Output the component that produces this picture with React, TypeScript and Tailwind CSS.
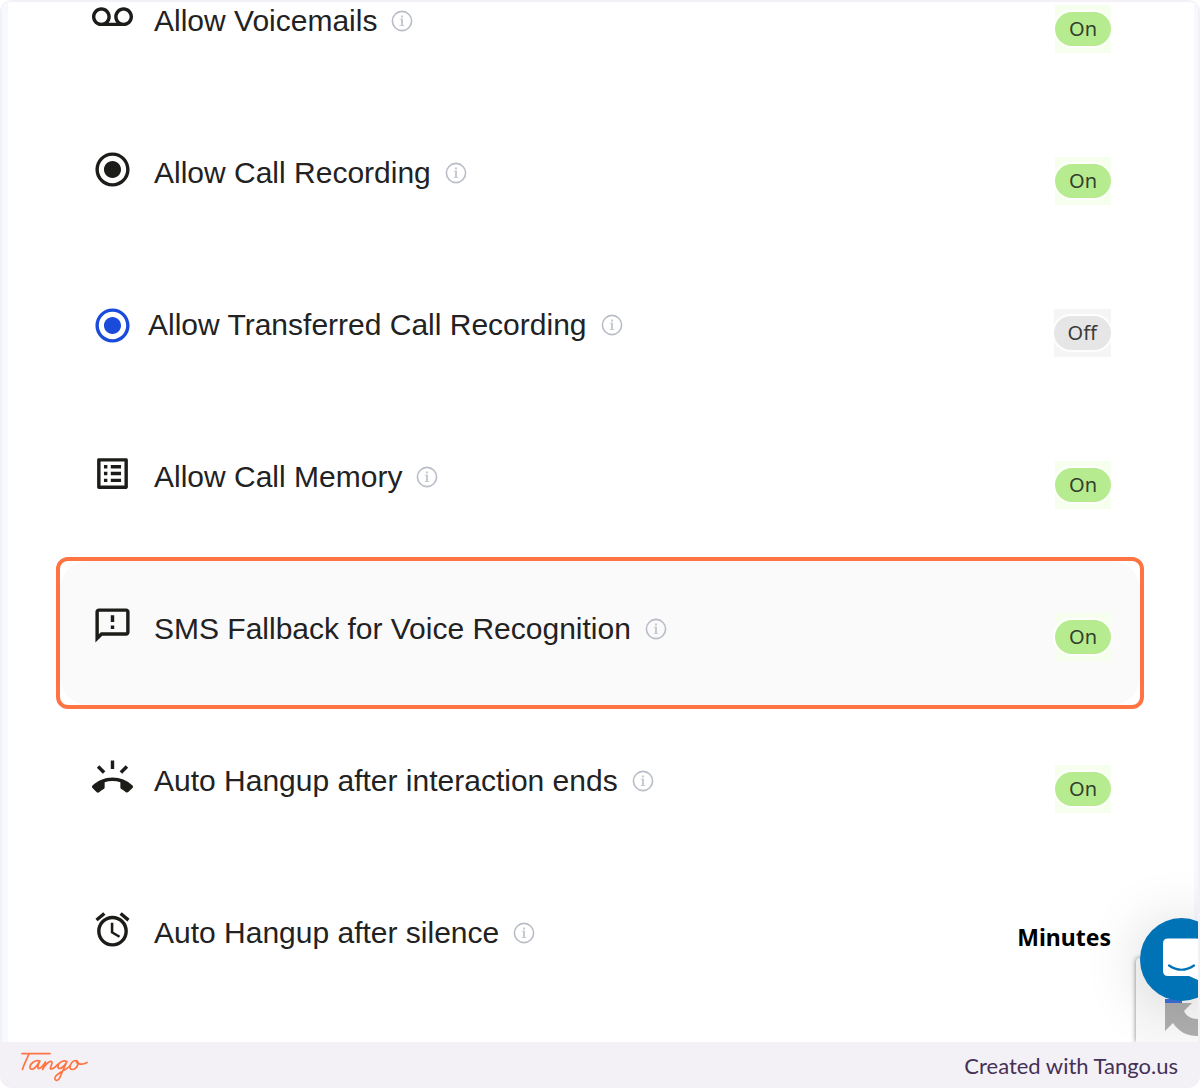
import React from "react";
import {
  MdVoicemail,
  MdRadioButtonChecked,
  MdListAlt,
  MdOutlineSmsFailed,
  MdRingVolume,
  MdAccessAlarm,
} from "react-icons/md";
import type { IconType } from "react-icons";

type Setting = {
  id: string;
  label: string;
  Icon: IconType;
  value: "On" | "Off" | "Minutes";
  active?: boolean;
  highlighted?: boolean;
};

const settings: Setting[] = [
  { id: "voicemail", label: "Allow Voicemails", Icon: MdVoicemail, value: "On" },
  { id: "recording", label: "Allow Call Recording", Icon: MdRadioButtonChecked, value: "On" },
  { id: "transferred", label: "Allow Transferred Call Recording", Icon: MdRadioButtonChecked, value: "Off", active: true },
  { id: "memory", label: "Allow Call Memory", Icon: MdListAlt, value: "On" },
  { id: "sms", label: "SMS Fallback for Voice Recognition", Icon: MdOutlineSmsFailed, value: "On", highlighted: true },
  { id: "hangup", label: "Auto Hangup after interaction ends", Icon: MdRingVolume, value: "On" },
  { id: "silence", label: "Auto Hangup after silence", Icon: MdAccessAlarm, value: "Minutes" },
];

function InfoButton({ label }: { label: string }) {
  return (
    <button type="button" aria-label={`About ${label}`} className="shrink-0">
      <svg viewBox="0 0 22 22" className="size-[22px]" fill="none" stroke="#b9bdc6">
        <circle cx="11" cy="11" r="9.6" strokeWidth="1.6" />
        <path d="M8.8 9.3H11M8.6 15.5h4.800" strokeWidth="1" stroke="#d0d2d8" />
        <path d="M11 8.8v7" strokeWidth="2" stroke="#c6c9d0" />
        <path d="M11 5.6v2" strokeWidth="2" stroke="#c6c9d0" />
      </svg>
    </button>
  );
}

function Toggle({ id, on }: { id: string; on: boolean }) {
  return (
    <button
      type="button"
      role="switch"
      aria-checked={on}
      aria-labelledby={id}
      className={on ? "bg-[#f6ffed] py-[7px]" : "bg-[#f5f5f5] py-[7px]"}
    >
      <span
        className={
          on
            ? "block rounded-full bg-[#b7eb8f] px-[14px] text-xl leading-[34px] text-[#33402e] ring-2 ring-white/90"
            : "block rounded-full bg-[#e6e6e6] px-[14px] text-xl leading-[34px] text-[#3a3a3a] ring-2 ring-white/90"
        }
      >
        {on ? "On" : "Off"}
      </span>
    </button>
  );
}

function Row({ id, label, Icon, value, active, highlighted }: Setting) {
  return (
    <li className={highlighted ? "h-[152px] rounded-xl border-4 border-[#ff7442]" : "h-[152px] p-1"}>
      <div
        className={
          highlighted
            ? "flex h-full items-center rounded-[28px] bg-[#fafafa] pr-[29px] pb-2 pl-8"
            : "flex h-full items-center pr-[29px] pb-2 pl-8"
        }
      >
        <Icon className={active ? "size-[41px] shrink-0 text-[#1a4bdb]" : "mb-2 size-[41px] shrink-0 text-[#1c1c19]"} />
        <span
          id={id}
          className={
            active
              ? "ml-[15px] text-[30px] leading-10 text-[#222222]"
              : "ml-[21px] text-[30px] leading-10 text-[#222222]"
          }
        >
          {label}
        </span>
        <span className="ml-[14px] flex">
          <InfoButton label={label} />
        </span>
        <span
          className={
            value === "Minutes"
              ? "mt-2 ml-auto flex font-['Noto_Sans',sans-serif]"
              : "mt-4 ml-auto flex font-['Noto_Sans',sans-serif]"
          }
        >
          {value === "Minutes" ? (
            <span className="text-[23px] leading-8 font-bold text-black">Minutes</span>
          ) : (
            <Toggle id={id} on={value === "On"} />
          )}
        </span>
      </div>
    </li>
  );
}

function TangoLogo() {
  return (
    <svg
      role="img"
      aria-label="Tango"
      viewBox="0 0 68 30"
      className="h-[30px] w-[68px]"
      fill="none"
      stroke="#ff7442"
      strokeWidth="1.7"
      strokeLinecap="round"
      strokeLinejoin="round"
    >
      <path d="M2 1.700H30M9 1.700C7 7 4 12 2.500 17.500" />
      <path d="M20 9C15 7.500 10 12 10 15C10 19 15 18 19.500 9.500L18 14C17 18.500 21 17 25.500 10L22.500 17.500C26 12 29.500 9 31.500 9.500C34 11 28 17.500 31.500 17C34 17 36 14 38.500 12" />
      <path d="M47 9.500C42 7.500 37.500 12 38 15C38.500 18 43 16.500 46.500 10.500L40.500 24C38.500 30 34 29 35 25.500C37 21 45 19 50 14" />
      <path d="M56 8.500C51 8.500 47.500 17.500 52 17.500C57 17.500 60.500 9.500 56 8.500C56 12 62 13.500 67 10.500" />
    </svg>
  );
}

function ChatWidget() {
  return (
    <div className="absolute right-0 bottom-0 h-[124px] w-[62px]">
      <div className="absolute right-0 bottom-0 h-[84px] w-[62px] overflow-hidden rounded-tl bg-[#f9f9f9] shadow-[0_0_5px_#808080]">
        <svg viewBox="0 0 62 84" className="h-[84px] w-[62px]">
          <path d="M29 41H46V45H29Z" fill="#3f6fd8" />
          <path d="M29 45H56L48 53C50 58 55 61 62 61V78C51 78 43 74 37 65L29 73Z" fill="#aeaeae" />
        </svg>
      </div>
      <button
        type="button"
        aria-label="Open chat"
        className="absolute top-0 left-1 size-[83px] rounded-full bg-[#0073b7] shadow-[0_4px_60px_rgba(0,0,0,0.16)]"
      >
        <svg viewBox="0 0 83 83" className="size-[83px]">
          <path d="M28 20.500H56Q60 20.500 60 24.500V63L49 58H28Q23 58 23 53V25.500Q23 20.500 28 20.500Z" fill="#fff" />
          <path d="M29 47.500Q41.500 56 54 47.500" fill="none" stroke="#0073b7" strokeWidth="2.200" strokeLinecap="round" />
        </svg>
      </button>
    </div>
  );
}

export default function App() {
  return (
    <div className="overflow-hidden rounded-xl bg-[#f3f1f6] font-['Liberation_Sans',Arial,sans-serif]">
      <main className="relative mx-[2px] mt-[2px] overflow-hidden rounded-t-lg bg-white">
        <div className="overflow-hidden border-r-4 border-l-[6px] border-[#f6f9fe]">
          <ul className="-mt-[53px] mr-[50px] mb-[29px] ml-12">
            {settings.map((setting) => (
              <Row key={setting.id} {...setting} />
            ))}
          </ul>
        </div>
        <ChatWidget />
      </main>
      <footer className="flex h-[46px] items-center justify-between pt-1 pr-[22px] pb-1 pl-5 font-[Lato,sans-serif] text-[22px] text-[#453057]">
        <span className="mt-1 flex">
          <TangoLogo />
        </span>
        <span>
          Created with <a href="#tango">Tango.us</a>
        </span>
      </footer>
    </div>
  );
}
